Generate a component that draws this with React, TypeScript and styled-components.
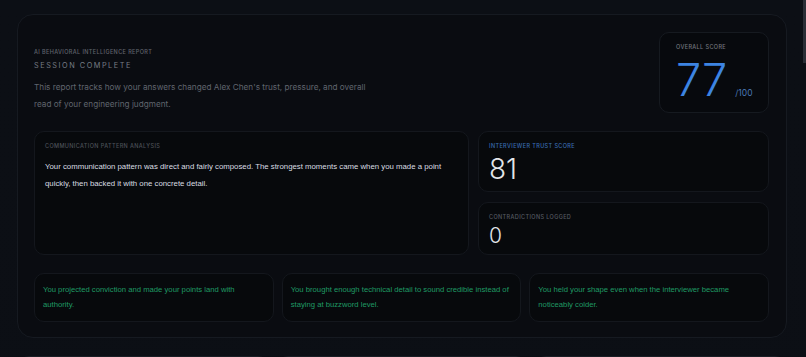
import React from "react";
import styled, { createGlobalStyle } from "styled-components";

const Global = createGlobalStyle`
  html, body { margin: 0; padding: 0; background: #0c0f15; }
  body { font-family: Inter, "Noto Sans", sans-serif; -webkit-font-smoothing: antialiased; }
  ::-webkit-scrollbar { width: 0; height: 0; }
`;

const Page = styled.div`
  padding: 14px 19px 40px 17px;
  display: flex;
  flex-direction: column;
  gap: 18px;
  min-height: 1980px;
  box-sizing: border-box;
  background: linear-gradient(180deg, #0c0f15 0%, #0b0e14 100%);
`;

const ScrollThumb = styled.div`
  position: fixed;
  top: 0;
  right: 0;
  width: 3px;
  height: 63px;
  background: #2a2e36;
`;

const Report = styled.section`
  border: 1px solid #161a21;
  border-radius: 16px;
  background: #0a0c11;
  padding: 17px 17px 15px 16px;
  display: flex;
  flex-direction: column;
`;

const Header = styled.div`
  display: flex;
  justify-content: space-between;
  align-items: flex-start;
  margin-bottom: 18px;
`;

const Intro = styled.div`
  margin-top: 16px;
  display: flex;
  flex-direction: column;
`;

const Eyebrow = styled.div<{ $color?: string }>`
  font-size: 5.5px;
  line-height: 8px;
  font-weight: 500;
  letter-spacing: 0.07em;
  text-transform: uppercase;
  color: ${(p) => p.$color || "#60646d"};
`;

const Title = styled.h1`
  margin: 5px 0 0;
  font-size: 7.3px;
  line-height: 10px;
  font-weight: 400;
  letter-spacing: 0.21em;
  text-transform: uppercase;
  color: #777c85;
`;

const Lead = styled.p`
  margin: 8px 0 0;
  max-width: 345px;
  font-size: 8.2px;
  line-height: 17px;
  color: #60656e;
`;

const ScoreCard = styled.div`
  width: 110px;
  height: 81px;
  box-sizing: border-box;
  border: 1px solid #161a20;
  border-radius: 10px;
  background: #07090d;
  padding: 10px 12px 0 16px;
`;

const ScoreRow = styled.div`
  margin-top: 6px;
  display: flex;
  align-items: baseline;
  gap: 8px;
`;

const BigScore = styled.span`
  font-size: 45px;
  line-height: 1;
  font-weight: 300;
  color: #3d84e2;
`;

const OutOf = styled.span`
  font-size: 8.5px;
  color: #4a78b5;
`;

const Middle = styled.div`
  display: grid;
  grid-template-columns: 1fr 291px;
  gap: 9px;
  height: 124px;
  margin-bottom: 18px;
`;

const Panel = styled.div`
  border: 1px solid #14171d;
  border-radius: 10px;
  background: #07090c;
  padding: 10px 10px 8px;
  box-sizing: border-box;
`;

const Stack = styled.div`
  display: flex;
  flex-direction: column;
  gap: 10px;
  & > * { flex: 1; }
`;

const Body = styled.p`
  margin: 8px 0 0;
  font-family: "Liberation Sans", Arial, sans-serif;
  font-size: 7.8px;
  line-height: 17px;
  color: #dadde2;
`;

const Metric = styled.div<{ $size: number; $gap: number }>`
  margin-top: ${(p) => p.$gap}px;
  font-size: ${(p) => p.$size}px;
  line-height: 1;
  font-weight: 300;
  color: #e3e6ea;
`;

const Notes = styled.div`
  display: grid;
  grid-template-columns: repeat(3, 1fr);
  gap: 8px;
`;

const Note = styled.div`
  border: 1px solid #14171d;
  border-radius: 10px;
  background: #07090c;
  padding: 8px 8px 9px;
  font-family: "Liberation Sans", Arial, sans-serif;
  font-size: 7.7px;
  line-height: 15px;
  color: #1f9a64;
  min-height: 47px;
  box-sizing: border-box;
`;

const Next = styled.div`
  display: grid;
  grid-template-columns: repeat(3, 1fr);
  gap: 6px;
`;

const NextCard = styled.div`
  height: 220px;
  border: 1px solid #1a1e25;
  border-radius: 12px;
  background: #0a0c11;
`;

export default function App() {
  return (
    <>
      <Global />
      <ScrollThumb />
      <Page>
        <Report>
          <Header>
            <Intro>
              <Eyebrow>AI Behavioral Intelligence Report</Eyebrow>
              <Title>Session Complete</Title>
              <Lead>
                This report tracks how your answers changed Alex Chen's trust, pressure, and overall
                read of your engineering judgment.
              </Lead>
            </Intro>
            <ScoreCard>
              <Eyebrow $color="#73777f">Overall Score</Eyebrow>
              <ScoreRow>
                <BigScore>77</BigScore>
                <OutOf>/100</OutOf>
              </ScoreRow>
            </ScoreCard>
          </Header>
          <Middle>
            <Panel>
              <Eyebrow $color="#4d5159">Communication Pattern Analysis</Eyebrow>
              <Body>
                Your communication pattern was direct and fairly composed. The strongest moments came
                when you made a point quickly, then backed it with one concrete detail.
              </Body>
            </Panel>
            <Stack>
              <Panel>
                <Eyebrow $color="#3a6db3">Interviewer Trust Score</Eyebrow>
                <Metric $size={28} $gap={5}>81</Metric>
              </Panel>
              <Panel>
                <Eyebrow $color="#565a62">Contradictions Logged</Eyebrow>
                <Metric $size={21} $gap={4}>0</Metric>
              </Panel>
            </Stack>
          </Middle>
          <Notes>
            <Note>You projected conviction and made your points land with authority.</Note>
            <Note>You brought enough technical detail to sound credible instead of staying at buzzword level.</Note>
            <Note>You held your shape even when the interviewer became noticeably colder.</Note>
          </Notes>
        </Report>
        <Next>
          <NextCard />
          <NextCard />
          <NextCard />
        </Next>
      </Page>
    </>
  );
}
